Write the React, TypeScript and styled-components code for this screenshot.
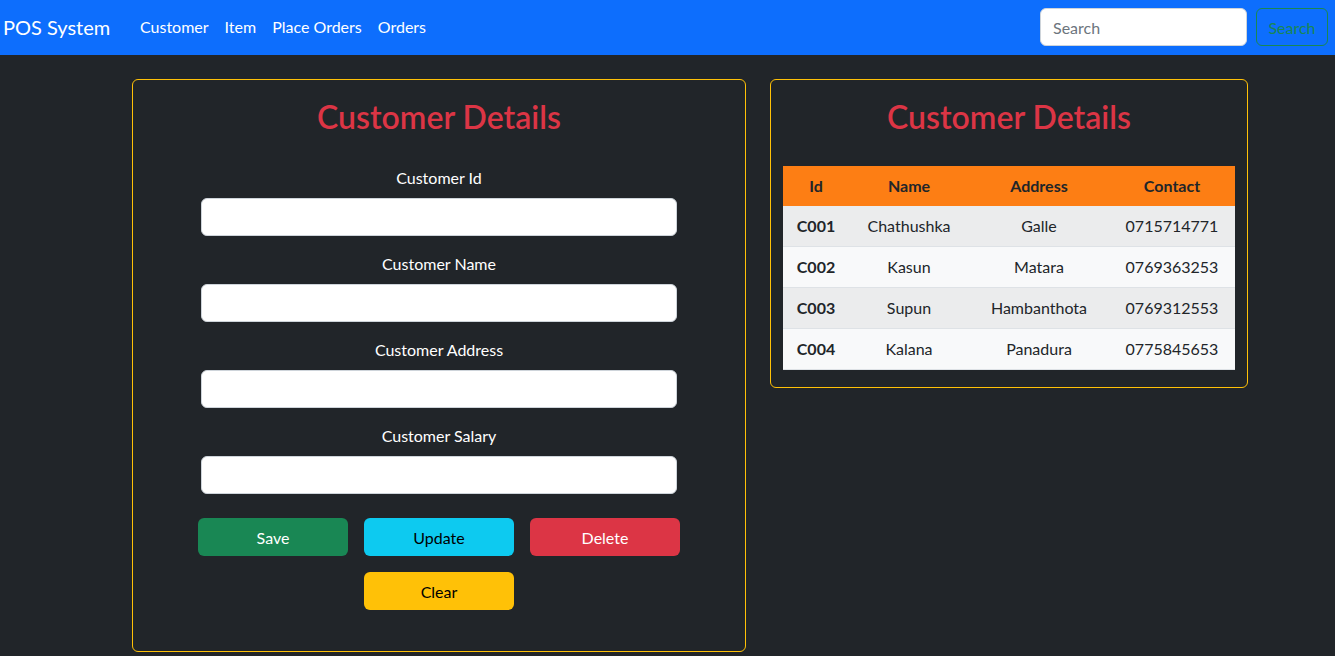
import React from "react";
import styled, { createGlobalStyle } from "styled-components";

const FONT = `"Lato", "Noto Sans", "Liberation Sans", sans-serif`;

const Global = createGlobalStyle`
  html, body { margin: 0; padding: 0; }
  body {
    background: #212529;
    font-family: ${FONT};
    font-size: 16px;
    color: #fff;
  }
  * { box-sizing: border-box; }
`;

const NavBar = styled.nav`
  height: 55px;
  background: #0d6efd;
  display: flex;
  align-items: center;
  padding: 0 7px 1px 3px;
`;

const Brand = styled.a`
  font-size: 20px;
  color: #fff;
  text-decoration: none;
  width: 129px;
  line-height: 30px;
`;

const NavLinks = styled.div`
  display: flex;
  flex: 1;
`;

const NavLink = styled.a`
  color: #fff;
  text-decoration: none;
  padding: 0 8px;
  font-size: 16px;
  line-height: 24px;
`;

const SearchForm = styled.form`
  display: flex;
  align-items: center;
  gap: 9px;
`;

const SearchInput = styled.input`
  width: 207px;
  height: 38px;
  border: 1px solid #ced4da;
  border-radius: 6px;
  padding: 0 12px;
  font-family: ${FONT};
  font-size: 16px;
  color: #212529;
  background: #fff;
  &::placeholder { color: #6c757d; }
`;

const OutlineButton = styled.button`
  width: 72px;
  height: 38px;
  border: 1px solid #198754;
  border-radius: 6px;
  background: transparent;
  color: #198754;
  font-family: ${FONT};
  font-size: 16px;
  padding: 0;
`;

const Main = styled.main`
  display: flex;
  align-items: flex-start;
  gap: 24px;
  padding: 24px 0 0 132px;
`;

const Card = styled.section<{ $w: number; $pb: number }>`
  width: ${(p) => p.$w}px;
  border: 1px solid #ffc107;
  border-radius: 6px;
  padding: 18px 12px ${(p) => p.$pb}px;
  display: flex;
  flex-direction: column;
  align-items: center;
`;

const Title = styled.h2`
  margin: 0;
  color: #dc3545;
  font-size: 32px;
  font-weight: 600;
  line-height: 38px;
  text-align: center;
`;

const Form = styled.div`
  margin-top: 30px;
  display: flex;
  flex-direction: column;
  align-items: center;
`;

const Field = styled.div`
  display: flex;
  flex-direction: column;
  align-items: center;
  gap: 8px;
  margin-bottom: 16px;
`;

const Label = styled.label`
  font-size: 16px;
  line-height: 24px;
  color: #fff;
`;

const TextInput = styled.input`
  width: 476px;
  height: 38px;
  border: 1px solid #ced4da;
  border-radius: 6px;
  background: #fff;
  font-family: ${FONT};
  font-size: 16px;
  padding: 0 12px;
`;

const ButtonGrid = styled.div`
  margin-top: 8px;
  display: grid;
  grid-template-columns: repeat(3, 150px);
  column-gap: 16px;
  row-gap: 16px;
`;

const ActionButton = styled.button<{ $bg: string; $fg: string; $col?: number }>`
  height: 38px;
  border: none;
  border-radius: 6px;
  background: ${(p) => p.$bg};
  color: ${(p) => p.$fg};
  font-family: ${FONT};
  font-size: 16px;
  grid-column: ${(p) => p.$col ?? "auto"};
`;

const Table = styled.table`
  margin-top: 30px;
  width: 452px;
  border-collapse: collapse;
  color: #212529;
  font-size: 16px;
  table-layout: fixed;
`;

const Th = styled.th`
  background: #fd7e14;
  font-weight: 700;
  text-align: center;
  padding: 8px 0;
  line-height: 24px;
`;

const Tr = styled.tr<{ $odd: boolean }>`
  background: ${(p) => (p.$odd ? "#ebeced" : "#f8f9fa")};
`;

const Td = styled.td<{ $bold?: boolean }>`
  text-align: center;
  padding: 8px 0;
  line-height: 24px;
  border-bottom: 1px solid #dee2e6;
  font-weight: ${(p) => (p.$bold ? 700 : 400)};
`;

const rows = [
  ["C001", "Chathushka", "Galle", "0715714771"],
  ["C002", "Kasun", "Matara", "0769363253"],
  ["C003", "Supun", "Hambanthota", "0769312553"],
  ["C004", "Kalana", "Panadura", "0775845653"],
];

const cols = [66, 120, 140, 126];

export default function App() {
  return (
    <>
      <Global />
      <NavBar>
        <Brand href="#">POS System</Brand>
        <NavLinks>
          <NavLink href="#">Customer</NavLink>
          <NavLink href="#">Item</NavLink>
          <NavLink href="#">Place Orders</NavLink>
          <NavLink href="#">Orders</NavLink>
        </NavLinks>
        <SearchForm onSubmit={(e) => e.preventDefault()}>
          <SearchInput placeholder="Search" />
          <OutlineButton type="submit">Search</OutlineButton>
        </SearchForm>
      </NavBar>
      <Main>
        <Card $w={614} $pb={41}>
          <Title>Customer Details</Title>
          <Form>
            {["Customer Id", "Customer Name", "Customer Address", "Customer Salary"].map((l) => (
              <Field key={l}>
                <Label>{l}</Label>
                <TextInput />
              </Field>
            ))}
            <ButtonGrid>
              <ActionButton $bg="#198754" $fg="#fff">Save</ActionButton>
              <ActionButton $bg="#0dcaf0" $fg="#000">Update</ActionButton>
              <ActionButton $bg="#dc3545" $fg="#fff">Delete</ActionButton>
              <ActionButton $bg="#ffc107" $fg="#000" $col={2}>Clear</ActionButton>
            </ButtonGrid>
          </Form>
        </Card>
        <Card $w={478} $pb={17}>
          <Title>Customer Details</Title>
          <Table>
            <colgroup>
              {cols.map((w, i) => (
                <col key={i} style={{ width: w }} />
              ))}
            </colgroup>
            <thead>
              <tr>
                <Th>Id</Th>
                <Th>Name</Th>
                <Th>Address</Th>
                <Th>Contact</Th>
              </tr>
            </thead>
            <tbody>
              {rows.map((r, i) => (
                <Tr key={r[0]} $odd={i % 2 === 0}>
                  <Td $bold>{r[0]}</Td>
                  <Td>{r[1]}</Td>
                  <Td>{r[2]}</Td>
                  <Td>{r[3]}</Td>
                </Tr>
              ))}
            </tbody>
          </Table>
        </Card>
      </Main>
    </>
  );
}
